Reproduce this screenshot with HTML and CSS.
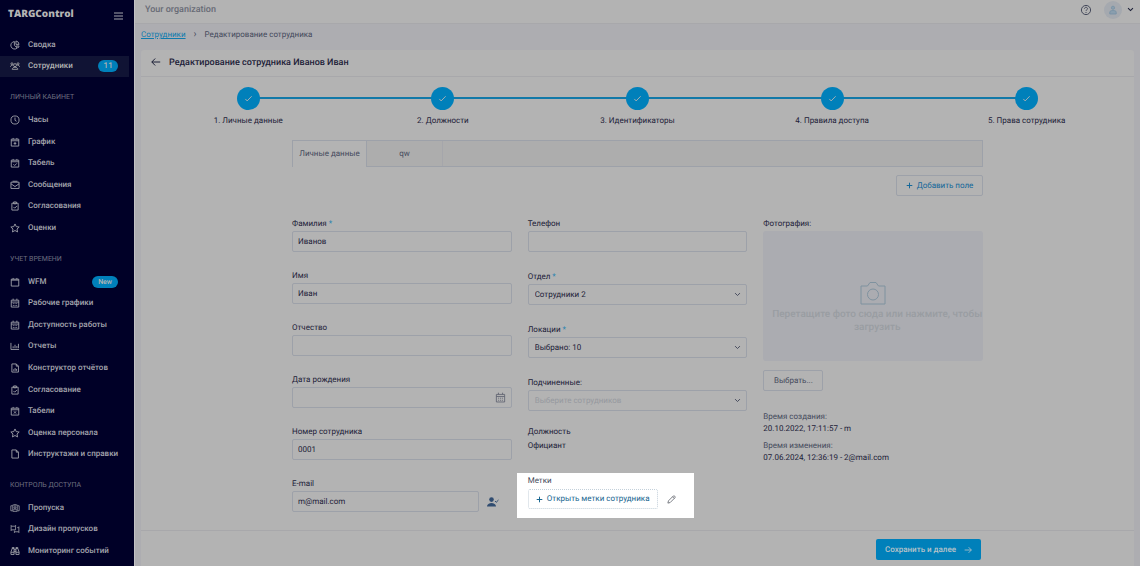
FILE: index.html
```html
<!DOCTYPE html>
<html lang="ru">
<head>
<meta charset="utf-8">
<meta name="viewport" content="width=device-width, initial-scale=1">
<title>TARGControl</title>
<link rel="stylesheet" href="styles.css">
</head>
<body>
<svg class="sprite" aria-hidden="true">
  <symbol id="i-pie" viewBox="0 0 16 16"><path d="M7 2.500a6 6 0 1 0 4.500 10.300L7 8.500zM9.500 1.500a6 6 0 0 1 5 5.500h-5zM10 9.500h4.500a6 6 0 0 1-1.500 3z"/></symbol>
  <symbol id="i-users" viewBox="0 0 18 16"><circle cx="9" cy="6.500" r="2.700"/><circle cx="3.500" cy="4" r="1.800"/><circle cx="14.500" cy="4" r="1.800"/><path d="M4 14c0-5 10-5 10 0zM.8 9.500c0-2 1.500-3 3.700-2.500M17.200 9.500c0-2-1.500-3-3.700-2.500"/></symbol>
  <symbol id="i-clock" viewBox="0 0 16 16"><circle cx="8" cy="8" r="6.500"/><path d="M8 4v4.500l2.500 1.500"/></symbol>
  <symbol id="i-calplus" viewBox="0 0 16 16"><path d="M2 3.500h12v11H2zM2 6h12M5 1.500v2M11 1.500v2M8 8v4.500M5.800 10.200h4.400"/></symbol>
  <symbol id="i-calcheck" viewBox="0 0 16 16"><path d="M2 3.500h12v11H2zM2 6h12M5 1.500v2M11 1.500v2M5.500 10l2 2 3.500-3.500"/></symbol>
  <symbol id="i-calx" viewBox="0 0 16 16"><path d="M2 3.500h12v11H2zM2 6h12M5 1.500v2M11 1.500v2M6.300 8.500l3.400 3.500M9.700 8.500l-3.400 3.500"/></symbol>
  <symbol id="i-calendar" viewBox="0 0 16 16"><path d="M2 3.500h12v11H2zM2 5h12M5 1.500v2M11 1.500v2"/></symbol>
  <symbol id="i-caldays" viewBox="0 0 16 16"><path d="M2 3.500h12v11H2zM2 6.500h12M5 1v2.500M11 1v2.500M4.500 9h1.500M7.300 9h1.500M10 9h1.500M4.500 12h1.500M7.300 12h1.500M10 12h1.500"/></symbol>
  <symbol id="i-mail" viewBox="0 0 16 16"><path d="M1.500 3.500h13v10h-13zM1.500 6L8 10.500 14.500 6M4 2h8"/></symbol>
  <symbol id="i-clip" viewBox="0 0 16 16"><path d="M3 3.500h10v11H3zM5.800 1.500h4.400v3H5.800zM5.500 9.500l2 2 3.500-3.500"/></symbol>
  <symbol id="i-star" viewBox="0 0 16 16"><path d="M8 1.500l2 4.300 4.700.6-3.500 3.200.9 4.700L8 12l-4.100 2.300.9-4.700L1.300 6.400 6 5.800z"/></symbol>
  <symbol id="i-chart" viewBox="0 0 16 16"><path d="M1.500 3v10.500h13M5 8.500v3M8 6v5.500M11 8v3.500M13.500 4.500v7"/></symbol>
  <symbol id="i-filechart" viewBox="0 0 16 16"><path d="M3 1.500h7l3.500 3.500v9.500H3zM10 1.500V5h3.500M6 10v2.500M8.200 8v4.500M10.500 9.500v3"/></symbol>
  <symbol id="i-file" viewBox="0 0 16 16"><path d="M3 1.500h7l3.500 3.500v9.500H3zM10 1.500V5h3.500"/></symbol>
  <symbol id="i-pass" viewBox="0 0 18 16"><path d="M5 2.500h8v11.500H5zM4 4H1.500v9H4M14 4h2.500v9H14M6.500 12c0-3.500 5-3.500 5 0M9 1v2.500"/><circle cx="9" cy="7" r="1.600"/></symbol>
  <symbol id="i-design" viewBox="0 0 18 16"><path d="M2 3h8v6.500H2zM13 5.500h3V13H8v-2M1 2h2M9 2h2M1 10.500h2M15 4.500h2M15 14h2M7 14h2"/></symbol>
  <symbol id="i-monitor" viewBox="0 0 16 16"><path d="M1.500 13.500v-4L3.500 4h3v9.500zM14.500 13.500v-4L12.500 4h-3v9.500zM6.500 6h3M6.500 9h3M3.500 4V2.500h3V4M9.500 4V2.500h3V4M1.500 10h5M9.500 10h5"/></symbol>
  <symbol id="i-chevron" viewBox="0 0 10 10"><path d="M1.500 3L5 6.500 8.500 3"/></symbol>
  <symbol id="i-plus" viewBox="0 0 10 10"><path d="M5 1v8M1 5h8"/></symbol>
  <symbol id="i-check" viewBox="0 0 10 10"><path d="M1.500 5.500l2 2.200L8.500 2.500"/></symbol>
  <symbol id="i-arrow" viewBox="0 0 10 10"><path d="M.8 5h8.400M5.800 1.500L9.200 5 5.800 8.500"/></symbol>
  <symbol id="i-back" viewBox="0 0 10 10"><path d="M9.200 5H.8M4.200 1.500L.8 5l3.400 3.500"/></symbol>
</svg>

<div class="app">
  <aside class="sidebar">
    <div class="brand">
      <span class="brand-name">TARGControl</span>
      <button class="plain" type="button" aria-label="Меню"><svg class="burger" viewBox="0 0 9 8"><path d="M0 1h9M0 4h9M0 7h9"/></svg></button>
    </div>
    <div class="menu">
      <nav class="nav">
        <a class="item" href="#"><svg class="icon"><use href="#i-pie"/></svg>Сводка</a>
        <a class="item active" href="#"><svg class="icon"><use href="#i-users"/></svg>Сотрудники<span class="badge">11</span></a>
        <h2 class="group">Личный кабинет</h2>
        <a class="item" href="#"><svg class="icon"><use href="#i-clock"/></svg>Часы</a>
        <a class="item" href="#"><svg class="icon"><use href="#i-calplus"/></svg>График</a>
        <a class="item" href="#"><svg class="icon"><use href="#i-calcheck"/></svg>Табель</a>
        <a class="item" href="#"><svg class="icon"><use href="#i-mail"/></svg>Сообщения</a>
        <a class="item" href="#"><svg class="icon"><use href="#i-clip"/></svg>Согласования</a>
        <a class="item" href="#"><svg class="icon"><use href="#i-star"/></svg>Оценки</a>
        <h2 class="group">Учет времени</h2>
        <a class="item" href="#"><svg class="icon"><use href="#i-calendar"/></svg>WFM<span class="badge badge-new">New</span></a>
        <a class="item" href="#"><svg class="icon"><use href="#i-caldays"/></svg>Рабочие графики</a>
        <a class="item" href="#"><svg class="icon"><use href="#i-caldays"/></svg>Доступность работы</a>
        <a class="item" href="#"><svg class="icon"><use href="#i-chart"/></svg>Отчеты</a>
        <a class="item" href="#"><svg class="icon"><use href="#i-filechart"/></svg>Конструктор отчётов</a>
        <a class="item" href="#"><svg class="icon"><use href="#i-clip"/></svg>Согласование</a>
        <a class="item" href="#"><svg class="icon"><use href="#i-calx"/></svg>Табели</a>
        <a class="item" href="#"><svg class="icon"><use href="#i-star"/></svg>Оценка персонала</a>
        <a class="item" href="#"><svg class="icon"><use href="#i-file"/></svg>Инструктажи и справки</a>
        <h2 class="group">Контроль доступа</h2>
        <a class="item" href="#"><svg class="icon"><use href="#i-pass"/></svg>Пропуска</a>
        <a class="item" href="#"><svg class="icon"><use href="#i-design"/></svg>Дизайн пропусков</a>
        <a class="item" href="#"><svg class="icon"><use href="#i-monitor"/></svg>Мониторинг событий</a>
      </nav>
      <div class="scroll"><div class="thumb"></div></div>
    </div>
  </aside>

  <div class="main">
    <header class="topbar">
      <span class="org">Your organization</span>
      <button class="plain" type="button" aria-label="Помощь"><svg class="help" viewBox="0 0 12 12"><circle cx="6" cy="6" r="4.600"/><path d="M4.500 4.800c0-2 3-2 3 0 0 1-1.500 1-1.500 2.100M6 8v1"/></svg></button>
      <button class="plain account" type="button" aria-label="Профиль">
        <span class="avatar"><svg class="person" viewBox="0 0 10 12"><circle cx="5" cy="3.200" r="2"/><path d="M1 11V8.500C1 6 9 6 9 8.500V11z"/></svg></span>
        <svg class="chev dark"><use href="#i-chevron"/></svg>
      </button>
    </header>
    <nav class="crumbs"><a href="#">Сотрудники</a><span class="sep">›</span><span>Редактирование сотрудника</span></nav>

    <main class="card">
      <div class="card-head">
        <button class="plain" type="button" aria-label="Назад"><svg class="back"><use href="#i-back"/></svg></button>
        <h1>Редактирование сотрудника Иванов Иван</h1>
      </div>

      <ol class="steps">
        <li><span class="dot"><svg><use href="#i-check"/></svg></span>1. Личные данные</li>
        <li><span class="dot"><svg><use href="#i-check"/></svg></span>2. Должности</li>
        <li><span class="dot"><svg><use href="#i-check"/></svg></span>3. Идентификаторы</li>
        <li><span class="dot"><svg><use href="#i-check"/></svg></span>4. Правила доступа</li>
        <li><span class="dot"><svg><use href="#i-check"/></svg></span>5. Права сотрудника</li>
      </ol>

      <div class="content">
        <div class="tabs" role="tablist">
          <button class="tab selected" type="button" role="tab" aria-selected="true">Личные данные</button>
          <button class="tab" type="button" role="tab" aria-selected="false">qw</button>
        </div>
        <div class="tools"><button class="btn add" type="button"><svg class="plus"><use href="#i-plus"/></svg>Добавить поле</button></div>

        <form class="form">
          <div class="col first">
            <div class="field"><label for="last">Фамилия <b>*</b></label><input id="last" type="text" value="Иванов"></div>
            <div class="field"><label for="name">Имя</label><input id="name" type="text" value="Иван"></div>
            <div class="field"><label for="middle">Отчество</label><input id="middle" type="text"></div>
            <div class="field"><label for="birth">Дата рождения</label><div class="overlay"><input id="birth" type="text"><svg class="cal"><use href="#i-caldays"/></svg></div></div>
            <div class="field"><label for="num">Номер сотрудника</label><input id="num" type="text" value="0001"></div>
            <div class="field"><label for="mail">E-mail</label>
              <div class="mail"><input id="mail" type="text" value="m@mail.com">
                <svg class="usercheck" viewBox="0 0 12 10"><circle cx="4.500" cy="2.600" r="2.300"/><path d="M0 9.500C0 4.800 9 4.800 9 9.500z"/><path class="tick" d="M8 4l1.200 1.300L11.500 3"/></svg></div>
            </div>
          </div>

          <div class="col second">
            <div class="field"><label for="phone">Телефон</label><input id="phone" type="text"></div>
            <div class="field"><label for="dept">Отдел <b>*</b></label><div class="overlay"><select id="dept"><option>Сотрудники 2</option></select><svg class="chev"><use href="#i-chevron"/></svg></div></div>
            <div class="field"><label for="loc">Локации <b>*</b></label><div class="overlay"><select id="loc"><option>Выбрано: 10</option></select><svg class="chev"><use href="#i-chevron"/></svg></div></div>
            <div class="field"><label for="sub">Подчиненные:</label><div class="overlay"><select id="sub" class="empty"><option>Выберите сотрудников</option></select><svg class="chev"><use href="#i-chevron"/></svg></div></div>
            <div class="position"><span>Должность</span><span>Официант</span></div>
            <section class="labels">
              <span>Метки</span>
              <div class="labels-row">
                <button class="open" type="button"><svg class="plus"><use href="#i-plus"/></svg>Открыть метки сотрудника</button>
                <button class="plain" type="button" aria-label="Изменить"><svg class="pencil" viewBox="0 0 10 10"><path d="M1 9l.6-2.500L7 1.100c1-.8 2.700.8 1.900 1.900L3.500 8.400zM6.200 2l1.900 1.900"/></svg></button>
              </div>
            </section>
          </div>

          <div class="col third">
            <span class="caption">Фотография:</span>
            <div class="drop">
              <svg class="camera" viewBox="0 0 26 24"><path d="M1 5h6.500l2.500-3.500h6L18.500 5H25v18H1z"/><circle cx="13" cy="13.500" r="5.500"/></svg>
              <p>Перетащите фото сюда или нажмите, чтобы загрузить</p>
            </div>
            <button class="btn choose" type="button">Выбрать...</button>
            <dl class="times">
              <dt>Время создания:</dt><dd>20.10.2022, 17:11:57 - m</dd>
              <dt>Время изменения:</dt><dd>07.06.2024, 12:36:19 - 2@mail.com</dd>
            </dl>
          </div>
        </form>
      </div>

      <footer class="footer"><div class="footer-in"><button class="save" type="button">Сохранить и далее<svg><use href="#i-arrow"/></svg></button></div></footer>
    </main>
  </div>
</div>
</body>
</html>
```
FILE: styles.css
```css
:root {
  --surface: #b3b3b3;
  --page: #adadb1;
  --line: #9da1a9;
  --soft: #a8a8ab;
  --ink: #1d2138;
  --muted: #454a5c;
  --blue: #0080ba;
  --link: #13679a;
}
* { box-sizing: border-box; }
body {
  margin: 0;
  font: 8px/12px Roboto, "Liberation Sans", sans-serif;
  text-rendering: geometricPrecision;
  color: var(--ink);
  background: var(--page);
}
svg { fill: none; stroke: currentColor; display: block; flex: none; }
button, input, select { font: inherit; text-rendering: inherit; color: inherit; margin: 0; border-radius: 2px; }
.sprite { display: none; }
.plain { background: none; border: 0; padding: 0; }
.app { display: flex; min-height: 100vh; }

/* Sidebar */
.sidebar {
  width: 135px;
  flex: none;
  display: flex;
  flex-direction: column;
  background: #000027;
  border-right: 1px solid #c2c2c4;
  color: #a4a5ad;
}
.brand {
  height: 34px;
  display: flex;
  justify-content: space-between;
  padding: 6px 11px 0 8px;
}
.brand-name { font: 800 10px/14px "Open Sans", sans-serif; color: #b3b3b3; }
.burger { width: 9px; height: 8px; margin-bottom: 8px; }
.menu { flex: 1; display: flex; }
.nav { flex: 1; display: flex; flex-direction: column; padding-bottom: 4px; }
.item {
  flex: 1 0 20px;
  display: flex;
  align-items: center;
  gap: 8px;
  padding: 0 11px 0 10px;
  color: inherit;
  font-weight: 500;
  text-decoration: none;
  white-space: nowrap;
}
.active { background: #101334; color: #b3b3b3; }
.icon { width: 10px; height: 10px; stroke-width: 1.4; }
.badge {
  margin-left: auto;
  width: 20px;
  border-radius: 6px;
  background: var(--blue);
  color: #b3b3b3;
  text-align: center;
}
.badge-new { width: 26px; font-size: 7px; }
.group {
  height: 32px;
  margin: 0;
  padding: 14px 0 0 10px;
  font-size: 7px;
  font-weight: 400;
  text-transform: uppercase;
  color: #6c6e7f;
}
.scroll { width: 8px; padding: 3px 3px 0 2px; margin-left: 0; }
.thumb { height: 74%; background: #282a45; }
.nav { margin-right: -1px; padding-right: 3px; }

/* Top bar */
.main { flex: 1; min-width: 0; display: flex; flex-direction: column; }
.topbar {
  height: 24px;
  display: flex;
  align-items: center;
  padding: 0 6px 4px 10px;
  background: var(--surface);
  border-bottom: 1px solid var(--soft);
  color: var(--muted);
}
.org { flex: 1; font-size: 9px; font-weight: 500; color: #686b76; }
.help { width: 12px; height: 12px; stroke-width: 1; }
.account { display: flex; align-items: center; gap: 5px; margin-left: 12px; }
.avatar {
  display: grid;
  place-items: center;
  width: 18px;
  height: 18px;
  border-radius: 50%;
  background: #a5a9af;
  color: #7590a4;
}
.person { width: 8px; height: 10px; fill: #8a9eae; }
.chev { width: 7px; height: 7px; stroke-width: 1.4; color: var(--muted); }
.dark { color: var(--ink); stroke-width: 1.6; }

.crumbs {
  height: 26px;
  display: flex;
  gap: 8px;
  padding: 5px 6px 0;
  color: var(--muted);
}
.crumbs a { color: #0f7bae; }
.sep { font-size: 10px; }

/* Card */
.card {
  flex: 1;
  display: flex;
  flex-direction: column;
  margin: 0 6px;
  background: var(--surface);
  border-radius: 3px 3px 0 0;
}
.card-head {
  height: 27px;
  display: flex;
  align-items: center;
  gap: 8px;
  padding: 0 10px;
  border-bottom: 1px solid var(--soft);
}
.card-head h1 { margin: 0; font-size: 9px; line-height: 12px; font-weight: 500; }
.back { width: 10px; height: 10px; margin-bottom: 2px; stroke-width: 1; }

.steps {
  display: grid;
  grid-template-columns: repeat(5, 1fr);
  list-style: none;
  margin: 0;
  padding: 10px 10px 13px;
}
.steps li {
  position: relative;
  display: flex;
  flex-direction: column;
  align-items: center;
  gap: 5px;
}
.steps li + li::before {
  content: "";
  position: absolute;
  top: 10px;
  right: 50%;
  width: 100%;
  height: 2px;
  background: #1279a8;
}
.dot {
  z-index: 1;
  display: grid;
  place-items: center;
  width: 23px;
  height: 23px;
  border-radius: 50%;
  background: var(--blue);
  color: #b3b3b3;
}
.dot svg { width: 9px; height: 9px; }

.content { width: 100%; max-width: 691px; margin: 0 auto; }
.tabs {
  height: 27px;
  display: flex;
  background: #adadad;
  border: 1px solid var(--line);
}
.tab {
  width: 76px;
  padding: 0;
  background: none;
  border: 0;
  border-right: 1px solid #a5a6ab;
  border-radius: 0;
  color: var(--muted);
}
.selected {
  width: 74px;
  margin-bottom: -1px;
  background: var(--surface);
  border-right-color: var(--line);
}
.tools { display: flex; justify-content: flex-end; padding: 8px 0 21px; }
.btn {
  height: 21px;
  display: flex;
  align-items: center;
  justify-content: center;
  background: none;
  border: 1px solid var(--line);
  color: var(--muted);
}
.add { width: 87px; gap: 4px; padding: 0; color: var(--link); }
.plus { width: 7px; height: 7px; stroke-width: 1.4; }

/* Form */
.form { display: grid; grid-template-columns: repeat(3, 1fr); gap: 16px; }
.col { display: flex; flex-direction: column; min-width: 0; }
.first { gap: 17px; }
.field { display: flex; flex-direction: column; gap: 1px; }
.field label, .caption { padding-top: 1px; }
.second .field { margin-bottom: 18px; }
.field b { color: #2281b0; font-weight: 400; }
input, select {
  width: 100%;
  height: 21px;
  padding: 0 5px;
  background: transparent;
  border: 1px solid var(--line);
  appearance: none;
}
select { padding: 0 6px; }
.empty { color: #96999f; }
.overlay { display: grid; align-items: center; }
.overlay > * { grid-area: 1 / 1; }
.overlay svg { justify-self: end; margin-right: 6px; pointer-events: none; }
.cal { width: 11px; height: 11px; stroke-width: 1.2; color: #5c606e; }
.mail { display: flex; align-items: center; gap: 8px; padding-right: 13px; }
.mail input { flex: 1; min-width: 0; }
.usercheck { width: 12px; height: 10px; fill: #304c70; stroke: none; }
.usercheck .tick { fill: none; stroke: #304c70; }
.position { display: flex; flex-direction: column; gap: 2px; margin: -3px 0 21px; }
.labels {
  align-self: flex-start;
  margin-left: -11px;
  padding: 2px 18px 9px 11px;
  background: #fff;
  color: #454a5c;
}
.labels-row { display: flex; align-items: center; gap: 9px; margin-top: 2px; }
.open {
  width: 130px;
  height: 20px;
  display: flex;
  align-items: center;
  justify-content: center;
  gap: 4px;
  padding: 0;
  white-space: nowrap;
  background: none;
  border: 1px dotted #c3d0da;
  color: #17658f;
}
.pencil { width: 9px; height: 9px; color: #6d7078; }

.caption { margin-bottom: 1px; }
.drop {
  height: 130px;
  display: flex;
  flex-direction: column;
  align-items: center;
  padding-top: 50px;
  background: #abacb1;
  border-radius: 3px;
  color: #999da2;
}
.camera { width: 26px; height: 24px; color: #7f929f; }
.drop p { margin: 3px 0 0; padding: 0 0 0 8px; font-size: 10px; line-height: 13px; font-weight: 500; text-align: center; }
.choose { width: 60px; margin-top: 9px; padding: 0; }
.times { margin: 20px 0 0; }
.times dt { color: var(--muted); }
.times dd { margin: 0 0 5px; }

.footer { margin-top: auto; border-top: 1px solid var(--soft); }
.footer-in {
  display: flex;
  justify-content: flex-end;
  max-width: 691px;
  margin: 0 auto;
  padding: 8px 2px 6px 0;
}
.save {
  width: 105px;
  height: 21px;
  display: flex;
  align-items: center;
  justify-content: center;
  gap: 8px;
  padding: 0;
  background: var(--blue);
  border: 0;
  color: #b9c3c9;
  font-weight: 500;
}
.save svg { width: 8px; height: 8px; }
```
